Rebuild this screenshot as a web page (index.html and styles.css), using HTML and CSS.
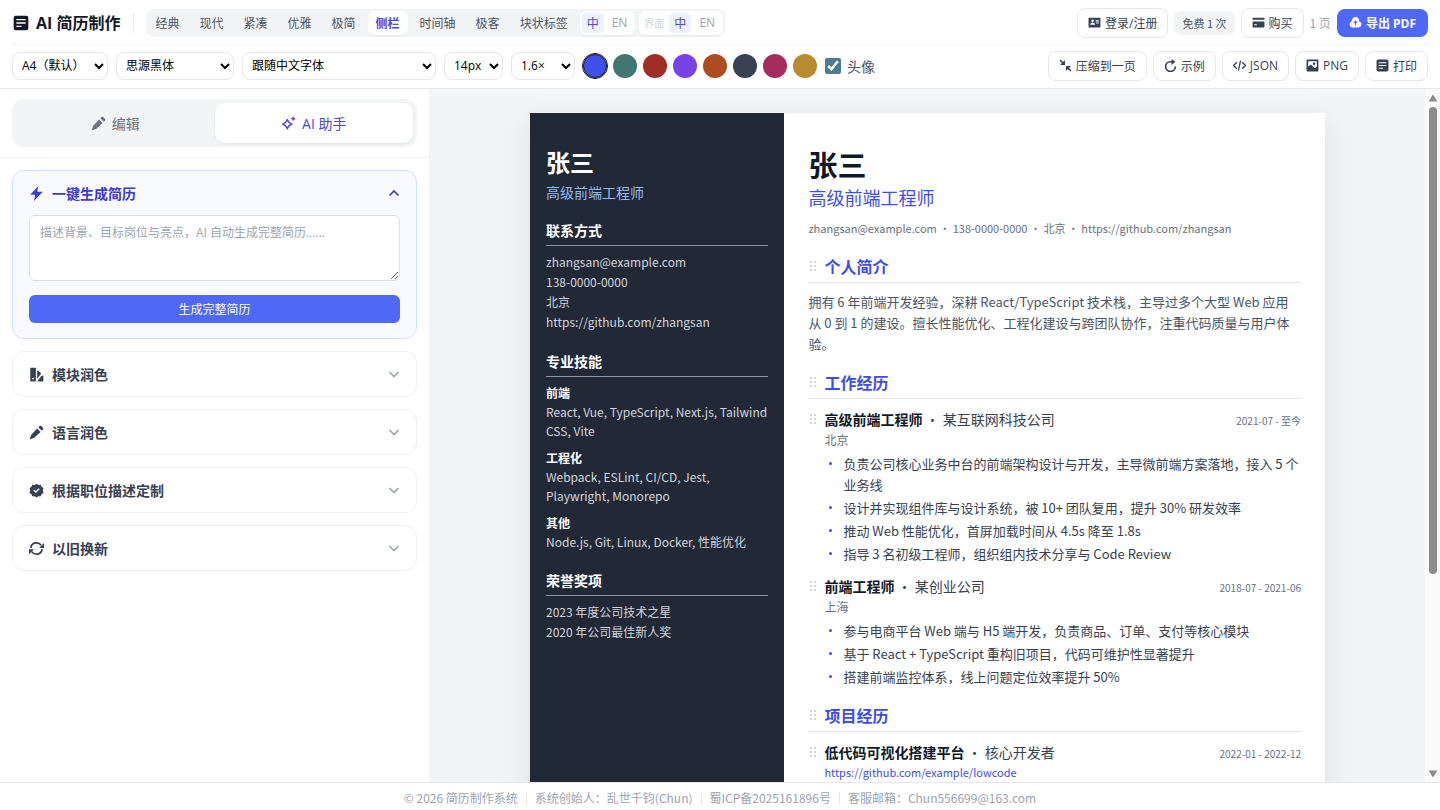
FILE: index.html
```html
<!DOCTYPE html>
<html lang="zh-CN">
<head>
    <meta charset="UTF-8">
    <meta name="viewport" content="width=device-width, initial-scale=1.0">
    <title>AI 简历制作</title>
    <link rel="stylesheet" href="styles.css">
</head>
<body>

    <!-- Icon sprite -->
    <svg class="sprite" xmlns="http://www.w3.org/2000/svg">
        <symbol id="i-doc" viewBox="0 0 24 24"><path fill-rule="evenodd" d="M4 1h16a3 3 0 0 1 3 3v16a3 3 0 0 1-3 3H4a3 3 0 0 1-3-3V4a3 3 0 0 1 3-3zm1 5v2h14V6zm0 5v2h14v-2zm0 5v2h8v-2z"/></symbol>
        <symbol id="i-id" viewBox="0 0 24 24"><path fill-rule="evenodd" d="M2 3h20a1 1 0 0 1 1 1v16a1 1 0 0 1-1 1H2a1 1 0 0 1-1-1V4a1 1 0 0 1 1-1zm2 13h9c0-2.200-2-4-4.500-4S4 13.800 4 16zm4.500-5a2.300 2.300 0 1 0 0-4.600 2.300 2.300 0 0 0 0 4.600zM14 8v2h6V8zm1 4v2h5v-2z"/></symbol>
        <symbol id="i-card" viewBox="0 0 24 24"><path d="M2 3h20a1 1 0 0 1 1 1v3H1V4a1 1 0 0 1 1-1z"/><path fill-rule="evenodd" d="M1 10h22v10a1 1 0 0 1-1 1H2a1 1 0 0 1-1-1zm3 5v2h5v-2z"/></symbol>
        <symbol id="i-cloud" viewBox="0 0 24 24"><path fill-rule="evenodd" d="M12 2a7 7 0 0 1 6.900 8.200A5.500 5.500 0 0 1 17.500 21h-11A5.500 5.500 0 0 1 5.100 10.200 7 7 0 0 1 12 2zm0 6-4 5h3v4h2v-4h3z"/></symbol>
        <symbol id="i-compress" viewBox="0 0 24 24"><path fill="none" stroke="currentColor" stroke-width="2.800" d="m2 2 7 7M22 22l-7-7"/><path d="M11 2v9H2l3-3 3-3zM13 22v-9h9l-3 3-3 3z"/></symbol>
        <symbol id="i-refresh" viewBox="0 0 24 24"><path fill="none" stroke="currentColor" stroke-width="3" d="M21 14a9 9 0 1 1-9-9h4"/><path d="m14 0 7 5-7 6z"/></symbol>
        <symbol id="i-code" viewBox="0 0 24 24"><path fill="none" stroke="currentColor" stroke-width="2.400" d="m7 6-6 6 6 6M17 6l6 6-6 6M14 3l-4 18"/></symbol>
        <symbol id="i-image" viewBox="0 0 24 24"><path fill-rule="evenodd" d="M3 1h18a2 2 0 0 1 2 2v18a2 2 0 0 1-2 2H3a2 2 0 0 1-2-2V3a2 2 0 0 1 2-2zm1 3v10l5-4 7 7 4-3V4zm11 2.500a2.200 2.200 0 1 1 0 4.400 2.200 2.200 0 0 1 0-4.400z"/></symbol>
        <symbol id="i-pencil" viewBox="0 0 24 24"><path d="m13 5.500 5.500 5.500L8.500 20.500 1 23l2.500-7.500zM15 3.500l1.800-1.800a2 2 0 0 1 2.800 0l2.700 2.700a2 2 0 0 1 0 2.800L20.500 9z"/></symbol>
        <symbol id="i-spark" viewBox="0 0 24 24"><path fill="none" stroke="currentColor" stroke-width="2.200" stroke-linejoin="round" d="M10 5.500c1 4 3 6 7.500 7.500-4.500 1.500-6.500 3.500-7.500 7.500-1-4-3-6-7.500-7.500 4.500-1.500 6.500-3.500 7.500-7.500z"/><path fill="#9333ea" d="M19.500 0c.6 2.300 1.700 3.700 4.500 4.500-2.800.8-3.900 2.200-4.500 4.500-.6-2.300-1.700-3.700-4.500-4.500 2.800-.8 3.900-2.200 4.500-4.500z"/></symbol>
        <symbol id="i-bolt" viewBox="0 0 24 24"><path d="M15 0 2 14h8l-2 10 14-15h-9z"/></symbol>
        <symbol id="i-palette" viewBox="0 0 24 24"><path fill-rule="evenodd" d="M3 1h7a1 1 0 0 1 1 1v20a1 1 0 0 1-1 1H3a1 1 0 0 1-1-1V2a1 1 0 0 1 1-1zm3.500 16a1.500 1.500 0 1 0 0 3 1.500 1.500 0 0 0 0-3z"/><path d="m13 5 6 4.500a1 1 0 0 1 .2 1.400L13 19zM20 14h2a1 1 0 0 1 1 1v7a1 1 0 0 1-1 1h-9z"/></symbol>
        <symbol id="i-badge" viewBox="0 0 24 24"><path fill-rule="evenodd" d="m12 1 3 2 3.700-.2 1.400 3.300 3 2-1 3.900 1 3.900-3 2-1.400 3.300L15 21l-3 2-3-2-3.700.2-1.400-3.300-3-2 1-3.900-1-3.900 3-2 1.400-3.300L9 3zm-1 15 6-6-1.600-1.600L11 12.800l-2.400-2.400L7 12z"/></symbol>
        <symbol id="i-sync" viewBox="0 0 24 24"><path fill="none" stroke="currentColor" stroke-width="2.800" d="M3 11a9 9 0 0 1 16.500-4M21 13a9 9 0 0 1-16.500 4"/><path d="M24 3v8h-8zM0 21v-8h8z"/></symbol>
        <symbol id="i-down" viewBox="0 0 12 12"><path fill="none" stroke="currentColor" stroke-width="1.600" d="m1.500 4 4.500 4.500L10.500 4"/></symbol>
        <symbol id="i-up" viewBox="0 0 12 12"><path fill="none" stroke="currentColor" stroke-width="1.600" d="M1.500 8.500 6 4l4.500 4.500"/></symbol>
        <symbol id="i-grip" viewBox="0 0 8 12"><path d="M1 1h2v2H1zM5 1h2v2H5zM1 5h2v2H1zM5 5h2v2H5zM1 9h2v2H1zM5 9h2v2H5z"/></symbol>
    </svg>

    <header class="toolbar">
        <div class="toolbar-row">
            <div class="brand">
                <svg><use href="#i-doc"/></svg>
                <h1>AI 简历制作</h1>
            </div>
            <nav class="templates">
                <button>经典</button>
                <button>现代</button>
                <button>紧凑</button>
                <button>优雅</button>
                <button>极简</button>
                <button class="active">侧栏</button>
                <button>时间轴</button>
                <button>极客</button>
                <button>块状标签</button>
                <div class="lang">
                    <button class="on">中</button>
                    <button>EN</button>
                </div>
                <div class="lang">
                    <span>界面</span>
                    <button class="on">中</button>
                    <button>EN</button>
                </div>
            </nav>
            <div class="actions">
                <button class="btn"><svg><use href="#i-id"/></svg>登录/注册</button>
                <span class="quota">免费 1 次</span>
                <button class="btn"><svg><use href="#i-card"/></svg>购买</button>
                <span class="pages">1 页</span>
                <button class="btn primary"><svg><use href="#i-cloud"/></svg>导出 PDF</button>
            </div>
        </div>

        <div class="toolbar-row">
            <div class="options">
                <select class="w-paper" aria-label="纸张"><option>A4（默认）</option></select>
                <select class="w-font" aria-label="中文字体"><option>思源黑体</option></select>
                <select class="w-latin" aria-label="英文字体"><option>跟随中文字体</option></select>
                <select class="w-size" aria-label="字号"><option>14px</option></select>
                <select class="w-line" aria-label="行距"><option>1.6×</option></select>
                <div class="swatches">
                    <button class="swatch blue selected" aria-label="蓝色"></button>
                    <button class="swatch green" aria-label="绿色"></button>
                    <button class="swatch red" aria-label="红色"></button>
                    <button class="swatch violet" aria-label="紫色"></button>
                    <button class="swatch orange" aria-label="橙色"></button>
                    <button class="swatch slate" aria-label="灰色"></button>
                    <button class="swatch rose" aria-label="玫红"></button>
                    <button class="swatch gold" aria-label="金色"></button>
                </div>
                <label class="avatar"><input type="checkbox" checked>头像</label>
            </div>
            <div class="actions">
                <button class="btn"><svg><use href="#i-compress"/></svg>压缩到一页</button>
                <button class="btn"><svg><use href="#i-refresh"/></svg>示例</button>
                <button class="btn"><svg><use href="#i-code"/></svg>JSON</button>
                <button class="btn"><svg><use href="#i-image"/></svg>PNG</button>
                <button class="btn"><svg><use href="#i-doc"/></svg>打印</button>
            </div>
        </div>
    </header>

    <div class="workspace">
        <aside class="panel">
            <div class="tabs">
                <div class="segment">
                    <button><svg><use href="#i-pencil"/></svg>编辑</button>
                    <button class="active"><svg><use href="#i-spark"/></svg>AI 助手</button>
                </div>
            </div>

            <div class="cards">
                <section class="card open">
                    <button class="card-head">
                        <svg class="icon"><use href="#i-bolt"/></svg>
                        <span>一键生成简历</span>
                        <svg class="chevron"><use href="#i-up"/></svg>
                    </button>
                    <textarea aria-label="描述" placeholder="描述背景、目标岗位与亮点，AI 自动生成完整简历……"></textarea>
                    <button class="generate">生成完整简历</button>
                </section>
                <section class="card">
                    <button class="card-head">
                        <svg class="icon"><use href="#i-palette"/></svg>
                        <span>模块润色</span>
                        <svg class="chevron"><use href="#i-down"/></svg>
                    </button>
                </section>
                <section class="card">
                    <button class="card-head">
                        <svg class="icon"><use href="#i-pencil"/></svg>
                        <span>语言润色</span>
                        <svg class="chevron"><use href="#i-down"/></svg>
                    </button>
                </section>
                <section class="card">
                    <button class="card-head">
                        <svg class="icon"><use href="#i-badge"/></svg>
                        <span>根据职位描述定制</span>
                        <svg class="chevron"><use href="#i-down"/></svg>
                    </button>
                </section>
                <section class="card">
                    <button class="card-head">
                        <svg class="icon"><use href="#i-sync"/></svg>
                        <span>以旧换新</span>
                        <svg class="chevron"><use href="#i-down"/></svg>
                    </button>
                </section>
            </div>
        </aside>

        <main class="preview">
            <article class="resume">
                <div class="resume-side">
                    <h2>张三</h2>
                    <p class="role">高级前端工程师</p>

                    <h3>联系方式</h3>
                    <ul>
                        <li>zhangsan@example.com</li>
                        <li>138-0000-0000</li>
                        <li>北京</li>
                        <li>https://github.com/zhangsan</li>
                    </ul>

                    <h3>专业技能</h3>
                    <dl>
                        <dt>前端</dt>
                        <dd>React, Vue, TypeScript, Next.js, Tailwind CSS, Vite</dd>
                        <dt>工程化</dt>
                        <dd>Webpack, ESLint, CI/CD, Jest, Playwright, Monorepo</dd>
                        <dt>其他</dt>
                        <dd>Node.js, Git, Linux, Docker, 性能优化</dd>
                    </dl>

                    <h3>荣誉奖项</h3>
                    <ul>
                        <li>2023 年度公司技术之星</li>
                        <li>2020 年公司最佳新人奖</li>
                    </ul>
                </div>

                <div class="resume-main">
                    <h2>张三</h2>
                    <p class="role">高级前端工程师</p>
                    <p class="contact">zhangsan@example.com ・ 138-0000-0000 ・ 北京 ・ https://github.com/zhangsan</p>

                    <h3><svg class="grip"><use href="#i-grip"/></svg>个人简介</h3>
                    <p class="summary">拥有 6 年前端开发经验，深耕 React/TypeScript 技术栈，主导过多个大型 Web 应用从 0 到 1 的建设。擅长性能优化、工程化建设与跨团队协作，注重代码质量与用户体验。</p>

                    <h3><svg class="grip"><use href="#i-grip"/></svg>工作经历</h3>
                    <section class="entry">
                        <div class="entry-head">
                            <svg class="grip"><use href="#i-grip"/></svg>
                            <h4>高级前端工程师<span> ・ 某互联网科技公司</span></h4>
                            <time>2021-07 - 至今</time>
                        </div>
                        <p class="place">北京</p>
                        <ul>
                            <li>负责公司核心业务中台的前端架构设计与开发，主导微前端方案落地，接入 5 个业务线</li>
                            <li>设计并实现组件库与设计系统，被 10+ 团队复用，提升 30% 研发效率</li>
                            <li>推动 Web 性能优化，首屏加载时间从 4.5s 降至 1.8s</li>
                            <li>指导 3 名初级工程师，组织组内技术分享与 Code Review</li>
                        </ul>
                    </section>
                    <section class="entry">
                        <div class="entry-head">
                            <svg class="grip"><use href="#i-grip"/></svg>
                            <h4>前端工程师<span> ・ 某创业公司</span></h4>
                            <time>2018-07 - 2021-06</time>
                        </div>
                        <p class="place">上海</p>
                        <ul>
                            <li>参与电商平台 Web 端与 H5 端开发，负责商品、订单、支付等核心模块</li>
                            <li>基于 React + TypeScript 重构旧项目，代码可维护性显著提升</li>
                            <li>搭建前端监控体系，线上问题定位效率提升 50%</li>
                        </ul>
                    </section>

                    <h3><svg class="grip"><use href="#i-grip"/></svg>项目经历</h3>
                    <section class="entry">
                        <div class="entry-head">
                            <svg class="grip"><use href="#i-grip"/></svg>
                            <h4>低代码可视化搭建平台<span> ・ 核心开发者</span></h4>
                            <time>2022-01 - 2022-12</time>
                        </div>
                        <a class="link" href="https://github.com/example/lowcode">https://github.com/example/lowcode</a>
                    </section>
                </div>
            </article>
        </main>

        <div class="scrollbar" aria-hidden="true">
            <svg viewBox="0 0 10 8"><path d="M5 .5 9.500 7.500H.5z"/></svg>
            <div class="track"><div class="thumb"></div></div>
            <svg viewBox="0 0 10 8"><path d="M5 7.500.5.500h9z"/></svg>
        </div>
    </div>

    <footer class="footer">
        <span>© 2026 简历制作系统</span>
        <span>系统创始人：乱世千钧(Chun)</span>
        <span>蜀ICP备2025161896号</span>
        <span>客服邮箱：Chun556699@163.com</span>
    </footer>

</body>
</html>
```
FILE: styles.css
```css
/* --- Base --- */
:root {
    --accent: #4f46e5;
    --accent-bright: #4f68f7;
    --theme: #3f4de8;
    --ink: #111827;
    --text: #374151;
    --muted: #6b7280;
    --faint: #9ca3af;
    --line: #e5e7eb;
    --soft: #f3f4f6;
    --ui: "Open Sans", "Noto Sans CJK SC", sans-serif;
    --paper: "Noto Sans CJK SC", sans-serif;
}

* {
    box-sizing: border-box;
}

body {
    margin: 0;
    height: 100vh;
    display: flex;
    flex-direction: column;
    font-family: var(--ui);
    font-size: 12px;
    color: var(--text);
    background: #fff;
    overflow: hidden;
}

h1, h2, h3, h4, p, ul, dl, dd {
    margin: 0;
    padding: 0;
}

ul {
    list-style: none;
}

button, select, textarea {
    font: inherit;
    color: inherit;
}

button {
    border: none;
    background: none;
    padding: 0;
    cursor: pointer;
    white-space: nowrap;
}

svg {
    fill: currentColor;
    flex: none;
}

.sprite {
    display: none;
}

/* --- Toolbar --- */
.toolbar {
    padding: 0 12px;
    border-bottom: 1px solid var(--line);
}

.toolbar-row {
    display: flex;
    align-items: center;
    height: 43px;
    padding-bottom: 2px;
}

.toolbar-row:first-child {
    height: 45px;
    padding: 1px 0 0;
    border-bottom: 1px solid var(--soft);
}

.brand {
    display: flex;
    align-items: center;
    gap: 7px;
    height: 20px;
    padding: 0 12px 0 1px;
    margin-right: 12px;
    border-right: 1px solid var(--line);
    color: var(--ink);
}

.brand svg {
    width: 16px;
    height: 16px;
}

.brand h1 {
    font-size: 16px;
    line-height: 20px;
    font-weight: 700;
    white-space: nowrap;
}

.templates {
    display: flex;
    align-items: center;
    gap: 4px;
    height: 28px;
    padding: 0 2px;
    border-radius: 8px;
    background: var(--soft);
    color: #4b5563;
}

.templates > button {
    height: 24px;
    padding: 0 8px;
    border-radius: 6px;
}

.templates > .active {
    background: #fff;
    color: var(--accent);
    font-weight: 700;
    box-shadow: 0 1px 2px rgba(0, 0, 0, 0.06);
}

.lang {
    display: flex;
    align-items: center;
    gap: 2px;
    height: 24px;
    padding: 0 2px;
    border-radius: 6px;
    background: #fff;
    color: var(--faint);
    box-shadow: 0 1px 2px rgba(0, 0, 0, 0.06);
}

.lang span {
    padding: 0 3px;
    font-size: 10px;
    color: #d1d5db;
}

.lang button {
    height: 20px;
    padding: 0 6px;
    border-radius: 4px;
}

.lang .on {
    padding: 0 5px;
    background: #eef2ff;
    color: var(--accent);
}

.actions {
    display: flex;
    align-items: center;
    gap: 6px;
    margin-left: auto;
}

.btn {
    display: flex;
    align-items: center;
    gap: 4px;
    height: 30px;
    padding: 0 10px;
    border: 1px solid var(--line);
    border-radius: 8px;
    background: #fff;
}

.btn svg {
    width: 13px;
    height: 13px;
}

.btn.primary {
    height: 28px;
    padding: 0 12px;
    border: none;
    background: var(--accent-bright);
    color: #fff;
    font-weight: 700;
}

.quota {
    padding: 0 8px;
    border-radius: 6px;
    background: var(--soft);
    color: #4b5563;
    font-family: var(--paper);
    font-size: 11px;
    line-height: 24px;
}

.pages {
    font-family: var(--paper);
    color: var(--faint);
}

.options {
    display: flex;
    align-items: center;
    gap: 8px;
}

.options select {
    height: 28px;
    padding: 0 5px;
    border: 1px solid var(--line);
    border-radius: 8px;
    background: #fff;
    color: #000;
}

.w-paper { width: 96px; }
.w-font { width: 118px; }
.w-latin { width: 194px; }
.w-size { width: 59px; }
.w-line { width: 64px; }

.swatches {
    display: flex;
    align-items: center;
    gap: 6px;
}

.swatch {
    width: 24px;
    height: 24px;
    border-radius: 50%;
}

.swatch.selected {
    outline: 1px solid var(--ink);
    border: 1px solid var(--ink);
}

.blue { background: #3f51ea; }
.green { background: #42776f; }
.red { background: #a22d26; }
.violet { background: #7843e6; }
.orange { background: #ad4b22; }
.slate { background: #374151; }
.rose { background: #a52d5d; }
.gold { background: #b88b30; }

.avatar {
    display: flex;
    align-items: center;
    gap: 6px;
    font-size: 14px;
    color: #4b5563;
}

.avatar input {
    width: 16px;
    height: 16px;
    margin: 0;
    accent-color: #4a7d92;
}

/* --- Workspace --- */
.workspace {
    flex: 1;
    min-height: 0;
    display: flex;
}

.panel {
    width: 430px;
    flex: none;
    border-right: 1px solid var(--soft);
}

.tabs {
    padding: 10px 12px;
    border-bottom: 1px solid var(--soft);
}

.segment {
    display: grid;
    grid-template-columns: 1fr 1fr;
    padding: 4px;
    border-radius: 12px;
    background: var(--soft);
}

.segment button {
    display: flex;
    align-items: center;
    justify-content: center;
    gap: 6px;
    height: 40px;
    border-radius: 10px;
    font-size: 14px;
    color: var(--muted);
}

.segment .active {
    background: #fff;
    color: var(--accent);
    box-shadow: 0 1px 3px rgba(0, 0, 0, 0.08);
}

.segment svg {
    width: 15px;
    height: 15px;
}

.cards {
    display: flex;
    flex-direction: column;
    gap: 12px;
    padding: 12px;
}

.card {
    padding: 0 16px;
    border: 1px solid #eeeff2;
    border-radius: 12px;
}

.card-head {
    display: flex;
    align-items: center;
    gap: 8px;
    width: 100%;
    height: 44px;
    font-size: 14px;
    font-weight: 700;
}

.card-head .icon {
    width: 15px;
    height: 15px;
}

.chevron {
    width: 12px;
    height: 12px;
    margin-left: auto;
    color: var(--faint);
}

.card.open {
    padding-bottom: 15px;
    border-color: #d0deff;
    background: #f9faff;
}

.card.open .card-head,
.card.open .chevron {
    color: #4038d0;
}

.card textarea {
    display: block;
    width: 100%;
    height: 66px;
    padding: 8px 10px;
    border: 1px solid #dcdfe4;
    border-radius: 6px;
    background: #fff;
    line-height: 18px;
}

.card textarea::placeholder {
    color: var(--faint);
}

.generate {
    width: 100%;
    height: 28px;
    margin-top: 14px;
    border-radius: 6px;
    background: var(--accent-bright);
    color: #fff;
}

/* --- Resume preview --- */
.preview {
    flex: 1;
    min-width: 0;
    padding: 24px;
    background: var(--soft);
    overflow: hidden;
}

.resume {
    display: grid;
    grid-template-columns: 32% 1fr;
    max-width: 795px;
    min-height: 1123px;
    margin: 0 auto;
    background: #fff;
    font-family: var(--paper);
    box-shadow: 0 8px 30px rgba(0, 0, 0, 0.09);
}

.resume-side {
    padding: 32px 16px;
    background: #212936;
    color: #d1d5db;
}

.resume-side h2 {
    font-size: 24px;
    line-height: 34px;
    color: #fff;
}

.resume-side .role {
    margin-top: 4px;
    font-size: 14px;
    line-height: 18px;
    color: #93bbf8;
}

.resume-side h3 {
    margin: 18px 0 6px;
    padding-bottom: 4px;
    border-bottom: 1px solid #9097a1;
    font-size: 14px;
    line-height: 22px;
    color: #fff;
}

.resume-side li {
    line-height: 20px;
}

.resume-side dt,
.resume-side dd {
    line-height: 19px;
}

.resume-side dt {
    font-weight: 700;
    color: #fff;
}

.resume-side dd + dt {
    margin-top: 8px;
}

.resume-main {
    padding: 31px 24px;
}

.resume-main h2 {
    font-size: 29px;
    line-height: 40px;
    color: var(--ink);
}

.resume-main .role {
    font-size: 18px;
    line-height: 26px;
    color: var(--theme);
}

.contact {
    margin-top: 8px;
    font-size: 11px;
    line-height: 20px;
    color: var(--muted);
}

.resume-main h3 {
    display: flex;
    align-items: center;
    margin: 16px 0 8px;
    padding-bottom: 4px;
    border-bottom: 1px solid var(--line);
    font-size: 16px;
    line-height: 24px;
    color: var(--theme);
}

.grip {
    width: 8px;
    height: 12px;
    margin: 0 7px 0 1px;
    color: #d1d5db;
}

.summary {
    font-size: 13px;
    line-height: 21px;
    color: #4b5563;
}

.entry + .entry {
    margin-top: 10px;
}

.entry-head {
    display: flex;
    align-items: baseline;
}

.entry-head h4 {
    flex: 1;
    font-size: 14px;
    line-height: 24px;
    color: var(--ink);
}

.entry-head h4 span {
    font-weight: 400;
    color: var(--text);
}

.entry-head time {
    font-size: 10px;
    line-height: 16px;
    color: var(--muted);
}

.place {
    padding-left: 16px;
    line-height: 18px;
    color: var(--muted);
}

.link {
    display: block;
    padding-left: 16px;
    font-size: 11px;
    line-height: 16px;
    color: var(--theme);
    text-decoration: none;
}

.entry ul {
    display: flex;
    flex-direction: column;
    gap: 2px;
    margin-top: 4px;
    padding-left: 21px;
}

.entry li {
    display: flex;
    font-size: 13px;
    line-height: 21px;
}

.entry li::before {
    content: "";
    flex: none;
    width: 3px;
    height: 3px;
    margin: 9px 11px 0 0;
    border-radius: 50%;
    background: var(--theme);
}

/* --- Scrollbar --- */
.scrollbar {
    display: flex;
    flex-direction: column;
    align-items: center;
    gap: 5px;
    width: 15px;
    padding: 5px 0 4px;
    background: #fafafa;
}

.scrollbar svg {
    width: 10px;
    height: 8px;
    fill: #8b8b8b;
}

.track {
    flex: 1;
    width: 8px;
}

.thumb {
    height: 71%;
    border-radius: 4px;
    background: #8b8b8b;
}

/* --- Footer --- */
.footer {
    display: flex;
    justify-content: center;
    align-items: center;
    height: 28px;
    padding-top: 2px;
    border-top: 1px solid var(--line);
    font-family: var(--paper);
    color: var(--faint);
}

.footer span {
    line-height: 12px;
}

.footer span + span {
    margin-left: 8px;
    padding-left: 8px;
    border-left: 1px solid var(--line);
}
```
